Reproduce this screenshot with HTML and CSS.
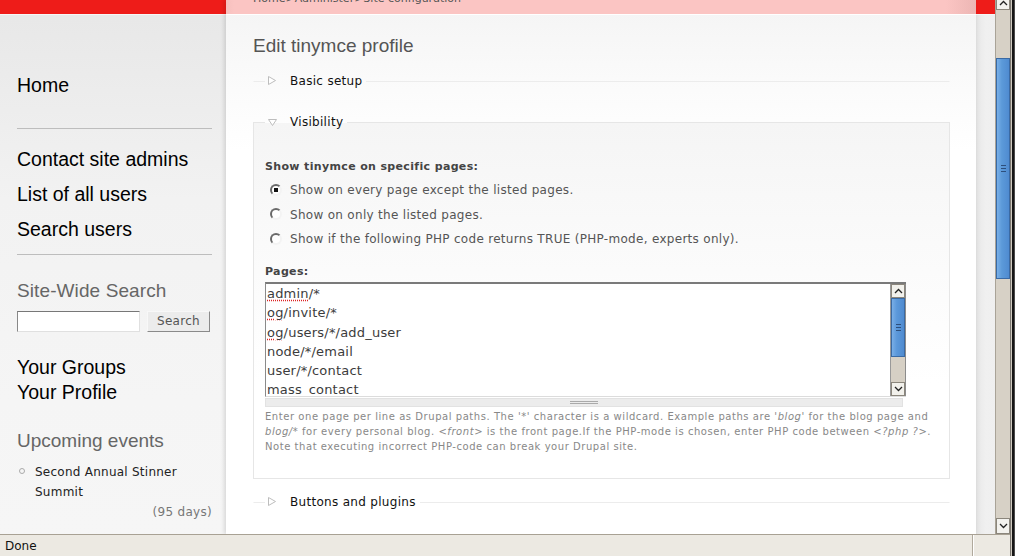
FILE: index.html
```html
<!DOCTYPE html>
<html>
<head>
<meta charset="utf-8">
<link rel="stylesheet" href="styles.css">
</head>
<body>
<div class="window">
  <div class="winmain">
    <div class="viewport">
      <div class="page">
        <aside class="sidebar">
          <div class="topbar red"></div>
          <div class="side-inner">
            <div class="home">Home</div>
            <div class="rule rule-1"></div>
            <ul class="nav">
              <li>Contact site admins</li>
              <li>List of all users</li>
              <li>Search users</li>
            </ul>
            <div class="rule rule-2"></div>
            <h2 class="block-title bt-search">Site-Wide Search</h2>
            <div class="search">
              <div class="search-input"></div>
              <div class="search-btn">Search</div>
            </div>
            <ul class="nav2">
              <li>Your Groups</li>
              <li>Your Profile</li>
            </ul>
            <h2 class="block-title bt-events">Upcoming events</h2>
            <ul class="events">
              <li><span class="bullet"></span><span>Second Annual Stinner<br>Summit</span></li>
            </ul>
            <div class="days">(95 days)</div>
          </div>
        </aside>
        <main class="main">
          <div class="crumbbar"><div class="crumbs">Home&gt;Administer&gt;Site configuration</div></div>
          <div class="content">
            <h1 class="title">Edit tinymce profile</h1>
            <fieldset class="fs collapsed fs-basic">
              <legend><span class="tri"><svg width="8" height="9" viewBox="0 0 8 9"><polygon points="0.5,0.5 7.5,4.5 0.5,8.5" fill="#fff" stroke="#bdbdbd"/></svg></span>Basic setup</legend>
            </fieldset>
            <fieldset class="fs open fs-vis">
              <legend><span class="tri"><svg width="9" height="7" viewBox="0 0 9 7"><polygon points="0.5,0.5 8.5,0.5 4.5,6.5" fill="#fff" stroke="#bdbdbd"/></svg></span>Visibility</legend>
              <div class="label">Show tinymce on specific pages:</div>
              <div class="radios">
                <div class="radio-row"><span class="radio checked"></span>Show on every page except the listed pages.</div>
                <div class="radio-row"><span class="radio"></span>Show on only the listed pages.</div>
                <div class="radio-row"><span class="radio"></span>Show if the following PHP code returns TRUE (PHP-mode, experts only).</div>
              </div>
              <div class="label label-pages">Pages:</div>
              <div class="textarea">
                <div class="ta-text"><span class="sp">admin</span>/*
<span class="sp">og</span>/invite/*
<span class="sp">og</span>/users/*/add_user
node/*/email
user/*/contact
mass_contact</div>
                <div class="ta-scroll">
                  <div class="ta-btn up"><svg width="9" height="6" viewBox="0 0 9 6"><polyline points="1,5 4.5,1.5 8,5" fill="none" stroke="#222" stroke-width="1.3"/></svg></div>
                  <div class="ta-thumb"><span class="grip"></span></div>
                  <div class="ta-track"></div>
                  <div class="ta-btn down"><svg width="9" height="6" viewBox="0 0 9 6"><polyline points="1,1 4.5,4.5 8,1" fill="none" stroke="#222" stroke-width="1.3"/></svg></div>
                </div>
              </div>
              <div class="grippie"><span class="grip-lines"></span></div>
              <div class="desc">Enter one page per line as Drupal paths. The '*' character is a wildcard. Example paths are '<em>blog</em>' for the blog page and<br><em>blog/*</em> for every personal blog. &lt;<em>front</em>&gt; is the front page.If the PHP-mode is chosen, enter PHP code between &lt;<em>?php ?</em>&gt;.<br>Note that executing incorrect PHP-code can break your Drupal site.</div>
            </fieldset>
            <fieldset class="fs collapsed fs-buttons">
              <legend><span class="tri"><svg width="8" height="9" viewBox="0 0 8 9"><polygon points="0.5,0.5 7.5,4.5 0.5,8.5" fill="#fff" stroke="#bdbdbd"/></svg></span>Buttons and plugins</legend>
            </fieldset>
          </div>
        </main>
        <div class="gutter"><div class="topbar red"></div></div>
      </div>
      <div class="vscroll">
        <div class="vs-btn vs-up"><svg width="9" height="6" viewBox="0 0 9 6"><polyline points="1,5 4.5,1.5 8,5" fill="none" stroke="#222" stroke-width="1.3"/></svg></div>
        <div class="vs-track vs-t1"></div>
        <div class="vs-thumb"><span class="grip"></span></div>
        <div class="vs-track vs-t2"></div>
        <div class="vs-btn vs-down"><svg width="9" height="6" viewBox="0 0 9 6"><polyline points="1,1 4.5,4.5 8,1" fill="none" stroke="#222" stroke-width="1.3"/></svg></div>
      </div>
    </div>
    <div class="statusbar">
      <div class="status-text">Done</div>
      <div class="status-panel"></div>
    </div>
  </div>
  <div class="frame"></div>
</div>
</body>
</html>
```

FILE: styles.css
```css
html, body {
  margin: 0;
  padding: 0;
}
body {
  width: 1015px;
  height: 556px;
  overflow: hidden;
  font-family: "DejaVu Sans", Verdana, sans-serif;
  background: #fff;
}
ul { list-style: none; margin: 0; padding: 0; }
h1, h2 { margin: 0; font-weight: normal; }

.window { display: flex; height: 556px; }
.winmain { width: 1010px; display: flex; flex-direction: column; }
.viewport { display: flex; height: 534px; }
.page { display: flex; width: 995px; height: 534px; overflow: hidden; }

.topbar { height: 14px; border-bottom: 1px solid #f6f6f6; }
.red { background: #ee1c19; }

/* Sidebar */
.sidebar {
  width: 226px;
  flex: none;
  background: linear-gradient(#e7e7e7, #f2f2f2 200px, #f5f5f5 400px, #f6f6f6);
}
.side-inner {
  padding: 0 14px 0 17px;
  font-family: "Liberation Sans", Arial, sans-serif;
  color: #000;
}
.home { font-size: 19.5px; line-height: 24px; margin-top: 58px; }
.rule { height: 1px; background: #bdbdbd; }
.rule-1 { margin-top: 31px; }
.nav { margin-top: 12.5px; font-size: 19.5px; line-height: 35px; }
.rule-2 { margin-top: 7.5px; }
.block-title { font-size: 19px; line-height: 24px; color: #666; }
.bt-search { margin-top: 24px; letter-spacing: 0.1px; }
.search { display: flex; margin-top: 8px; gap: 7px; }
.search-input {
  width: 123px; height: 21px; box-sizing: border-box;
  background: #fff;
  border: 1px solid; border-color: #777 #e0e0e0 #e0e0e0 #888;
}
.search-btn {
  width: 63px; height: 21px; box-sizing: border-box;
  background: #ececec;
  border: 1px solid; border-color: #f8f8f8 #8a8a8a #8a8a8a #f8f8f8;
  font-family: "DejaVu Sans", sans-serif; font-size: 12px; line-height: 19px;
  color: #555; text-align: center; letter-spacing: 0.3px;
}
.nav2 { margin-top: 22.5px; font-size: 19.5px; line-height: 25px; }
.bt-events { margin-top: 24.5px; }
.events {
  margin-top: 9px;
  font-family: "DejaVu Sans", sans-serif; font-size: 12px; line-height: 20px; color: #222;
  letter-spacing: 0.25px;
}
.events li { display: flex; }
.bullet {
  width: 6px; height: 6px; box-sizing: border-box; flex: none;
  border: 1px solid #aaa; border-radius: 50%;
  margin: 6px 10px 0 2px;
}
.days {
  text-align: right;
  font-family: "DejaVu Sans", sans-serif; font-size: 12px; line-height: 20px; color: #777;
  letter-spacing: 0.3px;
}

/* Main */
.main {
  width: 750px;
  flex: none;
  background: linear-gradient(#f4f4f4, #fbfbfb 90px, #fff 150px);
  box-shadow: -2px 0 4px rgba(0,0,0,0.12);
  position: relative;
  z-index: 1;
}
.crumbbar {
  height: 14px;
  overflow: hidden;
  background: linear-gradient(90deg, #f6c0be, #fbc5c3 8px, #fbc5c3 96%, #ecb6b4);
  border-bottom: 1px solid #fff;
}
.crumbs {
  margin: -8px 0 0 27px;
  font-size: 11px; line-height: 14px; color: #555;
}
.content { padding: 19px 26px 0 27px; }
.title {
  font-family: "Liberation Sans", Arial, sans-serif;
  font-size: 19px; line-height: 24px; color: #555;
}

.fs {
  margin: 0;
  padding: 0 11px;
  min-width: 0;
  border: 1px solid #e6e6e6;
}
.fs legend {
  padding: 0 4px 0 3px;
  font-size: 12px; line-height: 16px; color: #111;
  letter-spacing: 0.3px;
}
.tri {
  display: inline-block;
  width: 8px; margin-right: 14px;
  vertical-align: 0px;
}
.tri svg { display: block; }
.collapsed {
  border-color: #ececec transparent transparent transparent;
  border-bottom-width: 0;
}
.fs-basic { margin-top: 15px; }
.fs-vis {
  margin-top: 25px;
  padding-top: 29px;
  padding-bottom: 24px;
  background: linear-gradient(#f5f5f5, #fafafa 120px, #fff 260px);
}
.fs-buttons { margin-top: 15px; }

.label { font-size: 11px; font-weight: bold; line-height: 16px; color: #444; letter-spacing: 0.35px; }
.radios { margin-top: 3px; }
.radio-row {
  display: flex; align-items: center;
  height: 24.5px;
  font-size: 12px; color: #555;
  letter-spacing: 0.3px;
}
.radio {
  width: 12px; height: 12px; box-sizing: border-box; flex: none;
  margin: -1px 8px 0 5px;
  border-radius: 50%;
  border: 2px solid; border-color: #6a6a6a #f3f3f3 #f3f3f3 #6a6a6a;
  background: #fff;
  display: flex; align-items: center; justify-content: center;
}
.radio.checked::after {
  content: "";
  width: 4px; height: 4px; background: #111;
}
.label-pages { margin-top: 12.5px; }

.textarea {
  margin-top: 2px;
  width: 641px; height: 115px; box-sizing: border-box;
  display: flex;
  background: #fff;
  border-top: 2px solid #7a7a7a;
  border-left: 1px solid #8a8a8a;
  border-bottom: 1px solid #dcdcdc;
}
.ta-text {
  flex: 1;
  overflow: hidden;
  white-space: pre;
  padding-left: 1px;
  font-size: 13px; line-height: 19.3px; color: #3c3c3c;
  letter-spacing: 0.2px;
}
.sp { text-decoration: underline dotted #d22; text-underline-offset: 2px; }
.ta-scroll {
  width: 16px; flex: none;
  display: flex; flex-direction: column;
  background: #d6d0c5;
  border-left: 1px solid #999;
  border-right: 1px solid #8c8c8c;
  box-sizing: border-box;
}
.ta-btn {
  height: 14px; box-sizing: border-box; flex: none;
  background: #f2f1ec;
  border: 1px solid #8b867c;
  display: flex; align-items: center; justify-content: center;
}
.ta-thumb {
  height: 59px; flex: none; box-sizing: border-box;
  background: linear-gradient(90deg, #79aee6, #5b98da 40%, #4f8bd0);
  border: 1px solid #3a6aa4;
  display: flex; align-items: center; justify-content: center;
}
.ta-track { flex: 1; }
.grip {
  width: 5px; height: 5px;
  border-top: 1px solid #2d4f7c;
  border-bottom: 1px solid #2d4f7c;
  background: linear-gradient(#2d4f7c, #2d4f7c) center/100% 1px no-repeat;
}

.grippie {
  width: 638px; height: 9px; box-sizing: border-box;
  margin-top: 1px;
  background: #ececec;
  border: 1px solid #e2e2e2;
  display: flex; justify-content: center; align-items: center;
}
.grip-lines {
  width: 28px; height: 3px;
  border-top: 1px solid #aaa;
  border-bottom: 1px solid #aaa;
  box-sizing: border-box;
}
.desc {
  margin-top: 2px;
  font-size: 10px; line-height: 15px; color: #888;
  white-space: nowrap;
  letter-spacing: 0.55px;
}

/* Right gutter */
.gutter {
  width: 19px; flex: none;
  background: linear-gradient(90deg, #e0e0e0, #ececec 5px, #f0f0f0 10px, #efefef);
}

/* Window scrollbar */
.vscroll {
  width: 15px; flex: none;
  display: flex; flex-direction: column;
  background: #d7d1c6;
  border-left: 1px solid #a9a397;
  box-sizing: border-box;
}
.vs-btn {
  flex: none; box-sizing: border-box;
  background: #f3f2ee;
  border: 1px solid #8b867c;
  display: flex; align-items: center; justify-content: center;
}
.vs-up { height: 10px; border-top: 0; align-items: flex-start; }
.vs-down { height: 16px; }
.vs-t1 { height: 48px; }
.vs-t2 { flex: 1; }
.vs-thumb {
  height: 221px; flex: none; box-sizing: border-box;
  background: linear-gradient(90deg, #7ab0e8, #5c9ad9 40%, #4f8bd0);
  border: 1px solid #3a6aa4;
  display: flex; align-items: center; justify-content: center;
}

.frame {
  width: 5px; flex: none;
  background: linear-gradient(90deg, #7a7670 0 1px, #cfcac0 1px 2px, #151515 2px 4px, #4a4a4a 4px);
}

/* Status bar */
.statusbar {
  height: 22px; box-sizing: border-box;
  display: flex;
  background: #ece9e2;
  border-top: 1px solid #a8a194;
}
.status-text {
  flex: 1;
  padding-left: 5px;
  font-size: 12px; line-height: 22px; color: #111;
}
.status-panel {
  width: 37px;
  border-left: 1px solid #b0a99c;
  box-shadow: inset 1px 0 #fff;
}
```
